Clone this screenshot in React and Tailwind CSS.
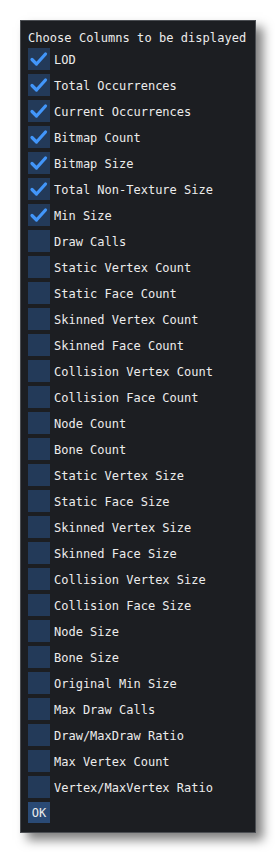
export default function App() {
  const items = [
    ["LOD", true],
    ["Total Occurrences", true],
    ["Current Occurrences", true],
    ["Bitmap Count", true],
    ["Bitmap Size", true],
    ["Total Non-Texture Size", true],
    ["Min Size", true],
    ["Draw Calls", false],
    ["Static Vertex Count", false],
    ["Static Face Count", false],
    ["Skinned Vertex Count", false],
    ["Skinned Face Count", false],
    ["Collision Vertex Count", false],
    ["Collision Face Count", false],
    ["Node Count", false],
    ["Bone Count", false],
    ["Static Vertex Size", false],
    ["Static Face Size", false],
    ["Skinned Vertex Size", false],
    ["Skinned Face Size", false],
    ["Collision Vertex Size", false],
    ["Collision Face Size", false],
    ["Node Size", false],
    ["Bone Size", false],
    ["Original Min Size", false],
    ["Max Draw Calls", false],
    ["Draw/MaxDraw Ratio", false],
    ["Max Vertex Count", false],
    ["Vertex/MaxVertex Ratio", false],
  ];
  return (
    <div className="w-[275px] h-[852px] bg-white pt-[20px] pl-[20px]" style={{ fontFamily: '"DejaVu Sans Mono", monospace' }}>
      <div className="w-[236px] h-[813px] bg-[#1c1e22] border border-[#4b4e53] shadow-[7px_7px_10px_rgba(0,0,0,0.5)] pt-[9px] pl-[7px] flex flex-col text-[12px] text-[#ececec]">
        <div className="h-[16px] leading-[16px] whitespace-nowrap tracking-[0.05px]">Choose Columns to be displayed</div>
        <div className="mt-[2px] flex flex-col gap-[4px]">
          {items.map(([label, checked]) => (
            <div key={label} className="flex items-center gap-[4px] h-[22px]">
              <div className="w-[22px] h-[22px] bg-[#233a59] flex items-center justify-center">
                {checked && (
                  <svg width="22" height="22" viewBox="0 0 22 22">
                    <path d="M4 11.5 L8.5 16 L17.5 6" fill="none" stroke="#4296fa" strokeWidth="3.2" strokeLinecap="round" strokeLinejoin="round" />
                  </svg>
                )}
              </div>
              <span className="whitespace-nowrap leading-[16px] pt-[1px]">{label}</span>
            </div>
          ))}
        </div>
        <div className="mt-[4px] w-[22px] h-[21px] bg-[#2a4a75] flex items-center justify-center text-[12px] leading-none">OK</div>
      </div>
    </div>
  );
}
